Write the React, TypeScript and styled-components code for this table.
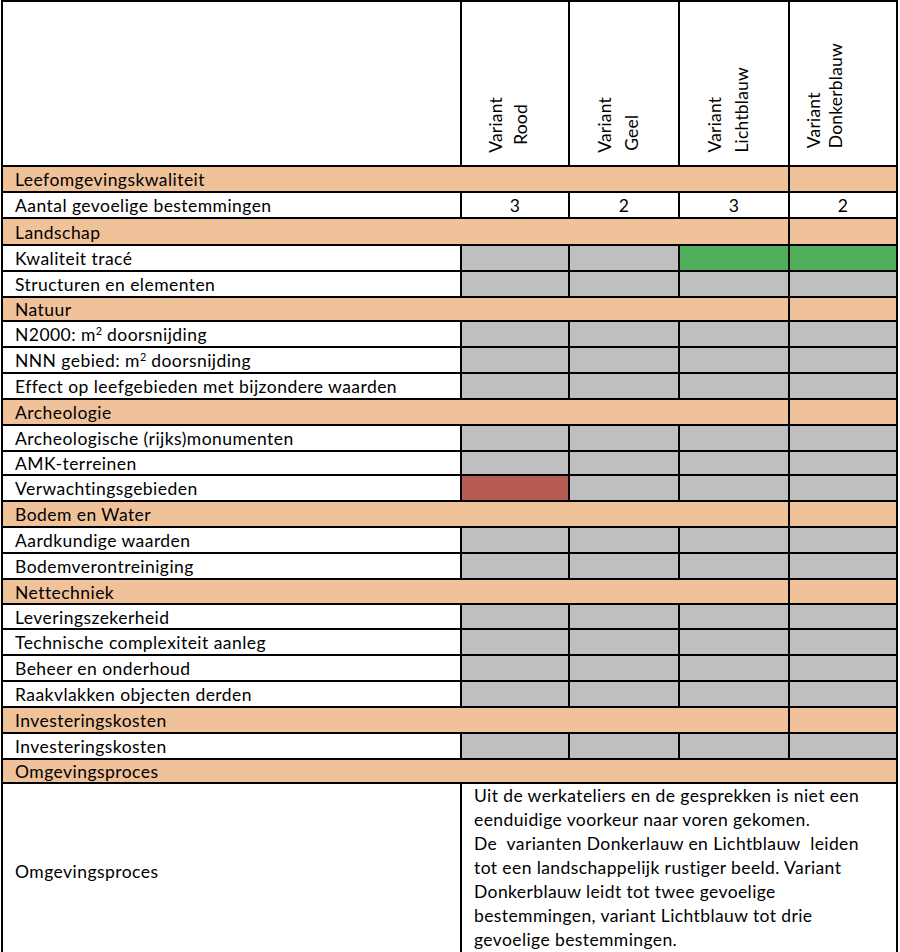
import React from 'react';
import styled, { createGlobalStyle } from 'styled-components';

const PEACH = '#F0C29A';
const GRAY = '#BFBFBF';
const GREEN = '#4FAD5B';
const RED = '#B65A52';

const GlobalStyle = createGlobalStyle`
  html, body { margin: 0; padding: 0; background: #fff; }
  body {
    font-family: Lato, "Open Sans", "Liberation Sans", sans-serif;
    font-size: 17.5px;
    letter-spacing: 0.45px;
    color: #000;
  }
`;

const Table = styled.div`
  box-sizing: border-box;
  width: 897px;
  margin-left: 1px;
  padding: 2px;
  background: #000;
  display: flex;
  flex-direction: column;
  gap: 2px;
`;

const Row = styled.div<{ $h?: number }>`
  display: grid;
  grid-template-columns: 457px 106px 108px 108px 106px;
  column-gap: 2px;
  height: ${(p) => (p.$h ? `${p.$h}px` : 'auto')};
`;

const Cell = styled.div<{ $bg?: string; $span?: string }>`
  box-sizing: border-box;
  background: ${(p) => p.$bg ?? '#fff'};
  grid-column: ${(p) => p.$span ?? 'auto'};
  min-width: 0;
`;

const LabelCell = styled(Cell)`
  display: flex;
  align-items: center;
  padding: 2px 0 0 12px;
  line-height: 1;
  white-space: nowrap;
`;

const Label = styled.span`
  display: block;
`;

const NumberCell = styled(Cell)`
  display: flex;
  align-items: center;
  justify-content: center;
  padding-top: 2px;
  line-height: 1;
`;

const HeaderCell = styled(Cell)<{ $pl: number; $pb: number }>`
  display: flex;
  align-items: flex-end;
  padding-left: ${(p) => p.$pl}px;
  padding-bottom: ${(p) => p.$pb}px;
`;

const VerticalText = styled.div<{ $lh: number }>`
  writing-mode: vertical-rl;
  transform: rotate(180deg);
  letter-spacing: 0.2px;
  line-height: ${(p) => p.$lh}px;
  white-space: nowrap;
`;

const Line = styled.span<{ $indent?: number }>`
  display: block;
  padding-top: ${(p) => p.$indent ?? 0}px;
`;

const NoteCell = styled(Cell)`
  padding: 0 0 6px 12px;
  line-height: 24px;
  letter-spacing: 0.4px;
  white-space: pre;
`;

const Sup = styled.sup`
  font-size: 0.62em;
  line-height: 0;
  vertical-align: 0.6em;
  letter-spacing: 0;
`;

type RowData =
  | { kind: 'cat'; label: string; h: number; full?: boolean }
  | { kind: 'num'; label: React.ReactNode; h: number; values: string[] }
  | { kind: 'score'; label: React.ReactNode; h: number; colors?: string[] };

const g4 = [GRAY, GRAY, GRAY, GRAY];

const rows: RowData[] = [
  { kind: 'cat', label: 'Leefomgevingskwaliteit', h: 24 },
  { kind: 'num', label: 'Aantal gevoelige bestemmingen', h: 24, values: ['3', '2', '3', '2'] },
  { kind: 'cat', label: 'Landschap', h: 25 },
  { kind: 'score', label: 'Kwaliteit tracé', h: 24, colors: [GRAY, GRAY, GREEN, GREEN] },
  { kind: 'score', label: 'Structuren en elementen', h: 24 },
  { kind: 'cat', label: 'Natuur', h: 22 },
  { kind: 'score', label: <>N2000: m<Sup>2</Sup> doorsnijding</>, h: 24 },
  { kind: 'score', label: <>NNN gebied: m<Sup>2</Sup> doorsnijding</>, h: 24 },
  { kind: 'score', label: 'Effect op leefgebieden met bijzondere waarden', h: 24 },
  { kind: 'cat', label: 'Archeologie', h: 24 },
  { kind: 'score', label: 'Archeologische (rijks)monumenten', h: 24 },
  { kind: 'score', label: 'AMK-terreinen', h: 22 },
  { kind: 'score', label: 'Verwachtingsgebieden', h: 24, colors: [RED, GRAY, GRAY, GRAY] },
  { kind: 'cat', label: 'Bodem en Water', h: 24 },
  { kind: 'score', label: 'Aardkundige waarden', h: 24 },
  { kind: 'score', label: 'Bodemverontreiniging', h: 24 },
  { kind: 'cat', label: 'Nettechniek', h: 23 },
  { kind: 'score', label: 'Leveringszekerheid', h: 23 },
  { kind: 'score', label: 'Technische complexiteit aanleg', h: 24 },
  { kind: 'score', label: 'Beheer en onderhoud', h: 24 },
  { kind: 'score', label: 'Raakvlakken objecten derden', h: 24 },
  { kind: 'cat', label: 'Investeringskosten', h: 24 },
  { kind: 'score', label: 'Investeringskosten', h: 24 },
  { kind: 'cat', label: 'Omgevingsproces', h: 22, full: true },
];

const headers = [
  { lines: ['Variant', 'Rood'], indents: [0, 8], pl: 21, pb: 12, lh: 25 },
  { lines: ['Variant', 'Geel'], indents: [0, 2], pl: 21, pb: 12, lh: 27 },
  { lines: ['Variant', 'Lichtblauw'], indents: [0, 0], pl: 21, pb: 12, lh: 27 },
  { lines: ['Variant', 'Donkerblauw'], indents: [0, 0], pl: 13, pb: 17, lh: 22 },
];

const note = [
  'Uit de werkateliers en de gesprekken is niet een',
  'eenduidige voorkeur naar voren gekomen.',
  'De  varianten Donkerlauw en Lichtblauw  leiden',
  'tot een landschappelijk rustiger beeld. Variant',
  'Donkerblauw leidt tot twee gevoelige',
  'bestemmingen, variant Lichtblauw tot drie',
  'gevoelige bestemmingen.',
];

function renderRow(r: RowData, i: number) {
  if (r.kind === 'cat') {
    return (
      <Row key={i} $h={r.h}>
        <LabelCell $bg={PEACH} $span={r.full ? '1 / 6' : '1 / 5'}>
          <Label>{r.label}</Label>
        </LabelCell>
        {!r.full && <Cell $bg={PEACH} />}
      </Row>
    );
  }
  if (r.kind === 'num') {
    return (
      <Row key={i} $h={r.h}>
        <LabelCell>
          <Label>{r.label}</Label>
        </LabelCell>
        {r.values.map((v, j) => (
          <NumberCell key={j}>{v}</NumberCell>
        ))}
      </Row>
    );
  }
  const colors = r.colors ?? g4;
  return (
    <Row key={i} $h={r.h}>
      <LabelCell>
        <Label>{r.label}</Label>
      </LabelCell>
      {colors.map((c, j) => (
        <Cell key={j} $bg={c} />
      ))}
    </Row>
  );
}

export default function App() {
  return (
    <>
      <GlobalStyle />
      <Table>
        <Row $h={163}>
          <Cell />
          {headers.map((h, i) => (
            <HeaderCell key={i} $pl={h.pl} $pb={h.pb}>
              <VerticalText $lh={h.lh}>
                {h.lines.map((l, j) => (
                  <Line key={j} $indent={h.indents[j]}>{l}</Line>
                ))}
              </VerticalText>
            </HeaderCell>
          ))}
        </Row>
        {rows.map(renderRow)}
        <Row>
          <LabelCell>
            <Label>Omgevingsproces</Label>
          </LabelCell>
          <NoteCell $span="2 / 6">
            {note.map((l, i) => (
              <React.Fragment key={i}>
                {l}
                {i < note.length - 1 && <br />}
              </React.Fragment>
            ))}
          </NoteCell>
        </Row>
      </Table>
    </>
  );
}
